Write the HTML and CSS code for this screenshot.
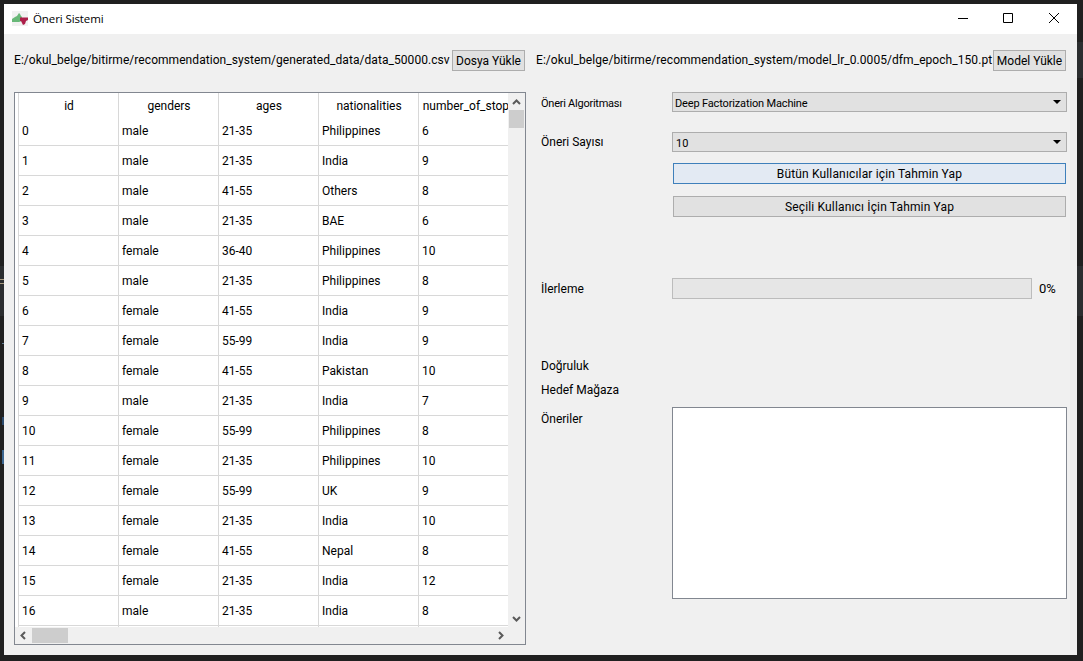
FILE: index.html
```html
<!DOCTYPE html>
<html lang="tr">
<head>
<meta charset="utf-8">
<title>Öneri Sistemi</title>
<link rel="stylesheet" href="styles.css">
</head>
<body>
<div class="desk-patch patch-l"></div>
<div class="desk-patch patch-r1"></div>
<div class="desk-patch patch-r2"></div>
<div class="desk-bit bit-a"></div>
<div class="desk-bit bit-b"></div>
<div class="desk-bit bit-c"></div>
<div class="desk-bit bit-d"></div>
<div class="desk-bit bit-e"></div>
<div class="window">
  <header class="titlebar">
    <svg class="app-icon" viewBox="0 0 16 16" aria-hidden="true">
      <rect width="16" height="15" fill="#f1f1f1"/>
      <path d="M0 8l3-2 2-1 2-3 1 1 1 2 1 1v4l-3 1H0z" fill="#68b878"/>
      <path d="M8 6.500h8V9l-2 1-1 3-2 1-1-2-1-2H8z" fill="#ad1f4a"/>
    </svg>
    <span class="app-title">Öneri Sistemi</span>
    <div class="win-controls">
      <span class="win-btn win-btn-min"><svg viewBox="0 0 10 10"><path d="M0 5.500h10" class="win-glyph"/></svg></span>
      <span class="win-btn"><svg viewBox="0 0 10 10"><path d="M.5.500h9v9h-9z" class="win-glyph"/></svg></span>
      <span class="win-btn"><svg viewBox="0 0 10 10"><path d="M0 0l10 10M10 0L0 10" class="win-glyph"/></svg></span>
    </div>
  </header>
  <div class="content">
    <div class="file-bar">
      <div class="file-group file-group-left">
        <span class="path">E:/okul_belge/bitirme/recommendation_system/generated_data/data_50000.csv</span>
        <button class="btn btn-file">Dosya Yükle</button>
      </div>
      <div class="file-group file-group-right">
        <span class="path">E:/okul_belge/bitirme/recommendation_system/model_lr_0.0005/dfm_epoch_150.pt</span>
        <button class="btn btn-file">Model Yükle</button>
      </div>
    </div>
    <div class="main">
      <div class="table-frame">
        <div class="table-view">
          <table class="data-table">
            <thead>
              <tr><th>id</th><th>genders</th><th>ages</th><th>nationalities</th><th>number_of_stops</th></tr>
            </thead>
            <tbody>
              <tr><td>0</td><td>male</td><td>21-35</td><td>Philippines</td><td>6</td></tr>
              <tr><td>1</td><td>male</td><td>21-35</td><td>India</td><td>9</td></tr>
              <tr><td>2</td><td>male</td><td>41-55</td><td>Others</td><td>8</td></tr>
              <tr><td>3</td><td>male</td><td>21-35</td><td>BAE</td><td>6</td></tr>
              <tr><td>4</td><td>female</td><td>36-40</td><td>Philippines</td><td>10</td></tr>
              <tr><td>5</td><td>male</td><td>21-35</td><td>Philippines</td><td>8</td></tr>
              <tr><td>6</td><td>female</td><td>41-55</td><td>India</td><td>9</td></tr>
              <tr><td>7</td><td>female</td><td>55-99</td><td>India</td><td>9</td></tr>
              <tr><td>8</td><td>female</td><td>41-55</td><td>Pakistan</td><td>10</td></tr>
              <tr><td>9</td><td>male</td><td>21-35</td><td>India</td><td>7</td></tr>
              <tr><td>10</td><td>female</td><td>55-99</td><td>Philippines</td><td>8</td></tr>
              <tr><td>11</td><td>female</td><td>21-35</td><td>Philippines</td><td>10</td></tr>
              <tr><td>12</td><td>female</td><td>55-99</td><td>UK</td><td>9</td></tr>
              <tr><td>13</td><td>female</td><td>21-35</td><td>India</td><td>10</td></tr>
              <tr><td>14</td><td>female</td><td>41-55</td><td>Nepal</td><td>8</td></tr>
              <tr><td>15</td><td>female</td><td>21-35</td><td>India</td><td>12</td></tr>
              <tr><td>16</td><td>male</td><td>21-35</td><td>India</td><td>8</td></tr>
              <tr><td></td><td></td><td></td><td></td><td></td></tr>
            </tbody>
          </table>
        </div>
        <div class="vscroll">
          <svg class="chev" viewBox="0 0 9 6"><path d="M1 5l3.500-3.500L8 5" class="chev-line"/></svg>
          <div class="vthumb"></div>
          <svg class="chev chev-end" viewBox="0 0 9 6"><path d="M1 1l3.500 3.500L8 1" class="chev-line"/></svg>
        </div>
        <div class="hscroll">
          <svg class="chev-h" viewBox="0 0 6 9"><path d="M5 1L1.500 4.500 5 8" class="chev-line"/></svg>
          <div class="hthumb"></div>
          <svg class="chev-h chev-h-end" viewBox="0 0 6 9"><path d="M1 1l3.500 3.500L1 8" class="chev-line"/></svg>
        </div>
      </div>
      <div class="form">
        <div class="form-row row-algo">
          <span class="label label-small">Öneri Algoritması</span>
          <div class="combo combo-algo"><span>Deep Factorization Machine</span><i class="combo-arrow"></i></div>
        </div>
        <div class="form-row row-count">
          <span class="label">Öneri Sayısı</span>
          <div class="combo"><span>10</span><i class="combo-arrow"></i></div>
        </div>
        <button class="btn btn-action btn-focus">Bütün Kullanıcılar için Tahmin Yap</button>
        <button class="btn btn-action btn-second">Seçili Kullanıcı İçin Tahmin Yap</button>
        <div class="form-row row-progress">
          <span class="label">İlerleme</span>
          <div class="progress"></div>
          <span class="percent">0%</span>
        </div>
        <div class="form-row row-accuracy"><span class="label">Doğruluk</span></div>
        <div class="form-row row-target"><span class="label">Hedef Mağaza</span></div>
        <div class="form-row row-results">
          <span class="label label-top">Öneriler</span>
          <div class="results-box"></div>
        </div>
      </div>
    </div>
  </div>
</div>
</body>
</html>
```
FILE: styles.css
```css
* { box-sizing: border-box; }
html, body { margin: 0; height: 100%; }
body {
  background: #202020;
  padding: 4px 6px 6px 4px;
  overflow: hidden;
  position: relative;
  font-family: Roboto, "Liberation Sans", sans-serif;
  font-size: 12px;
  color: #000;
}
.desk-patch { position: absolute; background: #2b2d2f; }
.patch-l { left: 0; top: 266px; width: 4px; height: 50px; }
.patch-r1 { right: 0; top: 42px; width: 6px; height: 36px; }
.patch-r2 { right: 0; top: 266px; width: 6px; height: 50px; }
.desk-bit { position: absolute; }
.bit-a { left: 0; top: 279px; width: 4px; height: 1px; background: #a89a80; }
.bit-b { left: 0; top: 283px; width: 4px; height: 1px; background: #a89a80; }
.bit-c { left: 2px; top: 343px; width: 2px; height: 1px; background: #5f7a90; }
.bit-d { left: 2px; top: 417px; width: 2px; height: 8px; background: #2b4a6c; }
.bit-e { left: 2px; top: 450px; width: 2px; height: 14px; background: #3c6690; }

.window {
  width: 1073px;
  height: 651px;
  background: #f0f0f0;
  display: flex;
  flex-direction: column;
}
.titlebar {
  height: 30px;
  background: #fff;
  display: flex;
  align-items: center;
  padding-left: 8px;
  flex: none;
}
.app-icon { width: 16px; height: 16px; margin-right: 5px; margin-top: -1px; }
.app-title {
  font-family: "Open Sans", "Noto Sans", sans-serif;
  font-size: 11.500px;
  letter-spacing: -0.1px;
  padding-bottom: 2px;
}
.win-controls { margin-left: auto; display: flex; height: 100%; }
.win-btn { width: 46px; display: flex; align-items: center; justify-content: center; padding-bottom: 2px; }
.win-btn-min { width: 44px; }
.win-btn svg { width: 10px; height: 10px; }
.win-glyph { fill: none; stroke: #000; stroke-width: 1; }

.content { flex: 1; padding: 16px 10px 10px; display: flex; flex-direction: column; min-height: 0; }
.file-bar { display: flex; height: 21px; flex: none; }
.file-group { display: flex; align-items: center; justify-content: space-between; }
.file-group-left { width: 511px; }
.file-group-right { width: 530px; margin-left: 11px; }
.path { white-space: nowrap; letter-spacing: 0.06px; padding-bottom: 2px; }

.btn {
  font: inherit;
  color: #000;
  background: #e1e1e1;
  border: 1px solid #adadad;
  padding: 0;
  display: block;
}
.btn-file { width: 73px; height: 21px; flex: none; }

.main { display: flex; margin-top: 21px; flex: 1; min-height: 0; }
.table-frame {
  width: 512px;
  height: 553px;
  border: 1px solid #828790;
  background: #f0f0f0;
  display: grid;
  grid-template-columns: 493px 17px;
  grid-template-rows: 534px 17px;
  flex: none;
}
.table-view { background: #fff; overflow: hidden; padding-left: 3px; }
.data-table {
  border-collapse: separate;
  border-spacing: 0;
  table-layout: fixed;
  width: 501px;
  border-left: 1px solid #d8d8d8;
}
.data-table th, .data-table td {
  width: 100px;
  padding: 0 0 0 3px;
  white-space: nowrap;
  overflow: hidden;
  font-weight: 400;
  border-right: 1px solid #d8d8d8;
}
.data-table th { height: 23px; text-align: center; padding: 2px 0 0 1px; }
.data-table td { height: 30px; border-bottom: 1px solid #d8d8d8; }

.vscroll { display: flex; flex-direction: column; align-items: center; padding-top: 6px; }
.chev { width: 9px; height: 6px; flex: none; }
.chev-end { margin-top: auto; margin-bottom: 5px; }
.chev-line { fill: none; stroke: #5a5a5a; stroke-width: 2; }
.vthumb { width: 15px; height: 18px; background: #cdcdcd; margin-top: 5px; }
.hscroll { display: flex; align-items: center; padding: 0 0 1px 5px; grid-column: 1; }
.chev-h { width: 6px; height: 9px; flex: none; }
.chev-h-end { margin-left: auto; margin-right: 4px; }
.hthumb { width: 36px; height: 15px; background: #cdcdcd; margin-left: 6px; }

.form { margin-left: 15px; width: 526px; display: flex; flex-direction: column; }
.form-row { display: flex; align-items: center; }
.label { width: 131px; flex: none; }
.label-small { font-size: 11px; letter-spacing: -0.25px; padding-top: 2px; }
.label-top { align-self: flex-start; }
.combo {
  width: 395px;
  height: 20px;
  background: #e1e1e1;
  border: 1px solid #adadad;
  font-size: 11px;
  display: flex;
  align-items: center;
  justify-content: space-between;
  padding: 2px 5px 0 3px;
}
.combo-algo { padding-left: 2px; letter-spacing: -0.15px; }
.combo-arrow {
  width: 0;
  height: 0;
  border-left: 4px solid transparent;
  border-right: 4px solid transparent;
  border-top: 4px solid #000;
  margin-top: -3px;
}
.row-count { margin-top: 20px; }
.btn-action { width: 393px; height: 21px; margin-left: 132px; flex: none; letter-spacing: 0.15px; }
.btn-focus { margin-top: 11px; background: #e3eaf3; border-color: #3f80bb; }
.btn-second { margin-top: 12px; }
.row-progress { margin-top: 61px; }
.progress { width: 360px; height: 21px; background: #e6e6e6; border: 1px solid #bcbcbc; flex: none; }
.percent { margin-left: 7px; font-size: 13px; }
.row-accuracy { margin-top: 57px; height: 20px; }
.row-target { margin-top: 4px; height: 20px; }
.row-results { margin-top: 7px; align-items: flex-start; }
.row-results .label { line-height: 24px; }
.results-box { width: 395px; height: 192px; background: #fff; border: 1px solid #828790; }
```
